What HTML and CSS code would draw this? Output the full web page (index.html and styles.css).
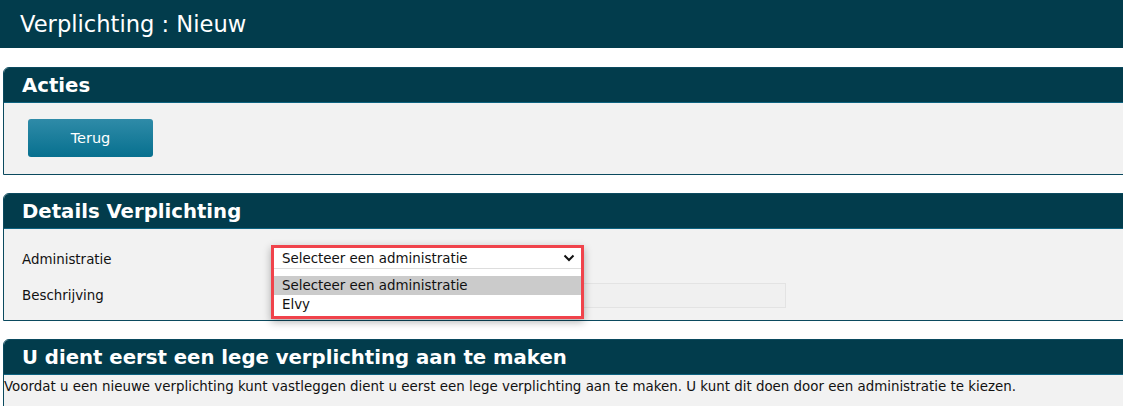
FILE: index.html
```html
<!DOCTYPE html>
<html lang="nl">
<head>
  <meta charset="UTF-8" />
  <title>Verplichting : Nieuw</title>
  <link rel="stylesheet" href="styles.css">
</head>
<body>
  <div class="topbar">Verplichting : Nieuw</div>

  <div class="panel">
    <div class="panel-head">Acties</div>
    <div class="panel-body actions">
      <button class="btn">Terug</button>
    </div>
  </div>

  <div class="panel">
    <div class="panel-head">Details Verplichting</div>
    <div class="panel-body form">
      <div class="row">
        <label>Administratie</label>
        <div class="field">
          <div class="select-open">
            <div class="select-current">
              <span>Selecteer een administratie</span>
              <svg class="chevron" width="12" height="8" viewBox="0 0 12 8"><path d="M1.5 1.5 L6 6 L10.5 1.5" fill="none" stroke="#111" stroke-width="2"/></svg>
            </div>
            <ul class="options">
              <li class="selected">Selecteer een administratie</li>
              <li>Elvy</li>
            </ul>
          </div>
        </div>
      </div>
      <div class="row">
        <label>Beschrijving</label>
        <div class="field">
          <input class="text" type="text">
        </div>
      </div>
    </div>
  </div>

  <div class="panel">
    <div class="panel-head">U dient eerst een lege verplichting aan te maken</div>
    <div class="panel-body info">
      Voordat u een nieuwe verplichting kunt vastleggen dient u eerst een lege verplichting aan te maken. U kunt dit doen door een administratie te kiezen.
    </div>
  </div>
</body>
</html>
```

FILE: styles.css
```css
* {
  margin: 0;
  padding: 0;
  box-sizing: border-box;
}

html, body {
  background: #fff;
  font-family: "DejaVu Sans", Verdana, sans-serif;
  font-size: 13.4px;
  color: #111;
  overflow: hidden;
}

.topbar {
  height: 48px;
  background: #023c4c;
  color: #fff;
  font-size: 22.6px;
  line-height: 48px;
  padding-left: 20px;
  margin-bottom: 19px;
}

.panel {
  margin-left: 3px;
  margin-right: -20px;
  margin-bottom: 18px;
  border: 1px solid #0b4a5f;
  border-radius: 6px 0 0 0;
  background: #f2f2f2;
}

.panel-head {
  background: #023c4c;
  color: #fff;
  font-weight: bold;
  font-size: 19.7px;
  height: 35px;
  line-height: 35px;
  padding-left: 18px;
  border-radius: 5px 0 0 0;
  border-bottom: 1px solid #0e6380;
}

.actions {
  padding: 16px 24px 17px;
}

.btn {
  width: 125px;
  height: 38px;
  border: none;
  border-radius: 3px;
  background: linear-gradient(#2f8ba8, #07708f);
  color: #fff;
  font-family: "DejaVu Sans", Verdana, sans-serif;
  font-size: 14.5px;
}

.form {
  padding: 18px 0 12px 18px;
  display: flex;
  flex-direction: column;
  gap: 11px;
}

.row {
  display: flex;
  align-items: center;
  height: 25px;
}

.row label {
  width: 250px;
}

.field {
  position: relative;
  flex: 0 0 514px;
  height: 25px;
}

.text {
  width: 514px;
  height: 25px;
  border: 1px solid #e3e3e3;
  background: #f0f0f0;
}

/* opened dropdown, highlighted with a red frame */
.select-open {
  position: absolute;
  top: -2px;
  left: -1px;
  width: 313px;
  border: 3px solid #f0434b;
  background: #fff;
  box-shadow: 0 3px 8px rgba(0, 0, 0, 0.3);
  z-index: 5;
}

.select-current {
  display: flex;
  justify-content: space-between;
  align-items: center;
  height: 21px;
  padding: 0 6px 0 8px;
  border-bottom: 1px solid #ddd;
}

.options {
  list-style: none;
  padding: 7px 0 2px;
}

.options li {
  height: 19px;
  line-height: 19px;
  padding-left: 8px;
}

.options .selected {
  background: #cbcbcb;
}

.info {
  padding: 4px 0 20px 0;
  line-height: 16px;
}
```
